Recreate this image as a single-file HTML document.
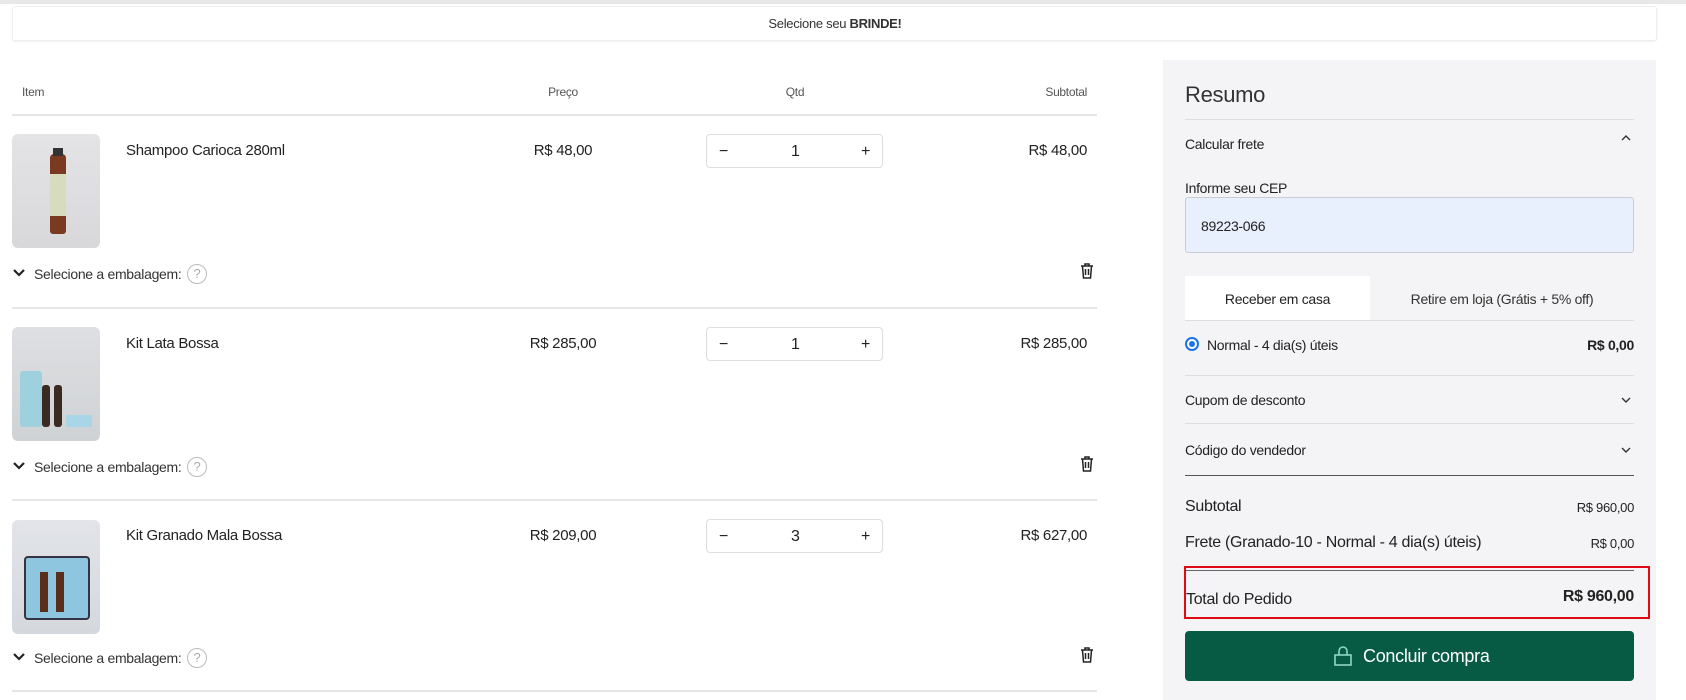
<!DOCTYPE html>
<html><head><meta charset="utf-8"><style>
*{margin:0;padding:0;box-sizing:border-box}
body{width:1686px;height:700px;background:#fff;position:relative;overflow:hidden;font-family:"Liberation Sans",sans-serif;color:#222;letter-spacing:-0.3px}
.a{position:absolute;white-space:nowrap}
.ln{position:absolute;height:2px;background:#e6e6e6}
.img{position:absolute;left:12px;width:88px;height:114px;border-radius:6px;background:linear-gradient(#e4e4e6,#d8d8da)}
.qty{position:absolute;left:706px;width:177px;height:34px;border:1px solid #ddd;border-radius:4px;background:#fff;font-size:16px}
.qty span{position:absolute;top:8px}
.sel{font-size:14px;color:#333}
.help{position:absolute;width:20px;height:20px;border:1.5px solid #bbb;border-radius:50%;color:#aaa;font-size:13px;text-align:center;line-height:17px}
.r{font-size:15px}
</style></head><body>
<div class="a" style="left:0;top:0;width:1686px;height:4px;background:#e8e8e8"></div>
<div class="a" style="left:12px;top:6px;width:1645px;height:35px;border:1px solid #eee;border-radius:3px;box-shadow:0 1px 2px rgba(0,0,0,.05)"></div>
<div class="a" style="left:0;width:1670px;text-align:center;top:16px;font-size:13px;color:#333">Selecione seu <b>BRINDE!</b></div>

<div class="a" style="left:22px;top:85px;font-size:12px;color:#555">Item</div>
<div class="a" style="left:513px;width:100px;text-align:center;top:85px;font-size:12px;color:#555">Preço</div>
<div class="a" style="left:745px;width:100px;text-align:center;top:85px;font-size:12px;color:#555">Qtd</div>
<div class="a" style="left:987px;width:100px;text-align:right;top:85px;font-size:12px;color:#555">Subtotal</div>
<div class="ln" style="left:12px;top:114px;width:1085px"></div>

<div class="img" style="top:134px"><div style="position:absolute;left:38px;top:20px;width:16px;height:80px;background:#7a3a22;border-radius:4px 4px 3px 3px"></div><div style="position:absolute;left:38px;top:40px;width:16px;height:42px;background:#d7dcbf"></div><div style="position:absolute;left:41px;top:14px;width:10px;height:8px;background:#333"></div></div>
<div class="a r" style="left:126px;top:142px">Shampoo Carioca 280ml</div>
<div class="a r" style="left:513px;width:100px;text-align:center;top:142px">R$ 48,00</div>
<div class="qty" style="top:134px"><span style="left:12px">−</span><span style="left:84px">1</span><span style="left:154px">+</span></div>
<div class="a r" style="left:987px;width:100px;text-align:right;top:142px">R$ 48,00</div>
<svg class="a" style="left:12px;top:268px" width="14" height="10" viewBox="0 0 14 10" fill="none" stroke="#222" stroke-width="2.2"><path d="M2 2l5 5 5-5"/></svg>
<div class="sel a" style="left:34px;top:266px">Selecione a embalagem:</div>
<div class="help" style="left:187px;top:264px">?</div>
<svg class="a" style="left:1079px;top:262px" width="16" height="18" viewBox="0 0 16 18" fill="none" stroke="#222" stroke-width="1.5"><path d="M2 4h12M6 4V2h4v2M3.5 4l1 12h7l1-12M6.5 7v6M9.5 7v6"/></svg>
<div class="ln" style="left:12px;top:307px;width:1085px"></div>

<div class="img" style="top:327px;background:linear-gradient(#dedfe2,#cfd2d4)"><div style="position:absolute;left:8px;top:44px;width:22px;height:56px;background:#9fd0de;border-radius:3px"></div><div style="position:absolute;left:30px;top:58px;width:8px;height:42px;background:#3a2a22;border-radius:3px"></div><div style="position:absolute;left:42px;top:58px;width:8px;height:42px;background:#3a2a22;border-radius:3px"></div><div style="position:absolute;left:54px;top:88px;width:26px;height:12px;background:#a8d6e6"></div></div>
<div class="a r" style="left:126px;top:335px">Kit Lata Bossa</div>
<div class="a r" style="left:513px;width:100px;text-align:center;top:335px">R$ 285,00</div>
<div class="qty" style="top:327px"><span style="left:12px">−</span><span style="left:84px">1</span><span style="left:154px">+</span></div>
<div class="a r" style="left:987px;width:100px;text-align:right;top:335px">R$ 285,00</div>
<svg class="a" style="left:12px;top:461px" width="14" height="10" viewBox="0 0 14 10" fill="none" stroke="#222" stroke-width="2.2"><path d="M2 2l5 5 5-5"/></svg>
<div class="sel a" style="left:34px;top:459px">Selecione a embalagem:</div>
<div class="help" style="left:187px;top:457px">?</div>
<svg class="a" style="left:1079px;top:455px" width="16" height="18" viewBox="0 0 16 18" fill="none" stroke="#222" stroke-width="1.5"><path d="M2 4h12M6 4V2h4v2M3.5 4l1 12h7l1-12M6.5 7v6M9.5 7v6"/></svg>
<div class="ln" style="left:12px;top:499px;width:1085px"></div>

<div class="img" style="top:520px;background:linear-gradient(#e2e4e8,#d4d8dc)"><div style="position:absolute;left:12px;top:36px;width:66px;height:64px;border:2px solid #334;border-radius:4px;background:#8ec6e0"></div><div style="position:absolute;left:28px;top:52px;width:8px;height:40px;background:#5a2e1a"></div><div style="position:absolute;left:44px;top:52px;width:8px;height:40px;background:#5a2e1a"></div></div>
<div class="a r" style="left:126px;top:527px">Kit Granado Mala Bossa</div>
<div class="a r" style="left:513px;width:100px;text-align:center;top:527px">R$ 209,00</div>
<div class="qty" style="top:519px"><span style="left:12px">−</span><span style="left:84px">3</span><span style="left:154px">+</span></div>
<div class="a r" style="left:987px;width:100px;text-align:right;top:527px">R$ 627,00</div>
<svg class="a" style="left:12px;top:652px" width="14" height="10" viewBox="0 0 14 10" fill="none" stroke="#222" stroke-width="2.2"><path d="M2 2l5 5 5-5"/></svg>
<div class="sel a" style="left:34px;top:650px">Selecione a embalagem:</div>
<div class="help" style="left:187px;top:648px">?</div>
<svg class="a" style="left:1079px;top:646px" width="16" height="18" viewBox="0 0 16 18" fill="none" stroke="#222" stroke-width="1.5"><path d="M2 4h12M6 4V2h4v2M3.5 4l1 12h7l1-12M6.5 7v6M9.5 7v6"/></svg>
<div class="ln" style="left:12px;top:690px;width:1085px"></div>

<div class="a" style="left:1163px;top:60px;width:493px;height:640px;background:#f4f4f6"></div>
<div class="a" style="left:1185px;top:82px;font-size:22px;color:#333">Resumo</div>
<div class="ln" style="left:1185px;top:119px;width:449px;height:1px;background:#ddd"></div>
<div class="a" style="left:1185px;top:136px;font-size:14px">Calcular frete</div>
<svg class="a" style="left:1620px;top:134px" width="12" height="8" viewBox="0 0 12 8" fill="none" stroke="#333" stroke-width="1.4"><path d="M2 6l4-4 4 4"/></svg>
<div class="a" style="left:1185px;top:180px;font-size:14px">Informe seu CEP</div>
<div class="a" style="left:1185px;top:197px;width:449px;height:56px;background:#e8f0fe;border:1px solid #c8ccd4;border-radius:3px"></div>
<div class="a" style="left:1201px;top:218px;font-size:14px">89223-066</div>
<div class="a" style="left:1185px;top:276px;width:185px;height:44px;background:#fff"></div>
<div class="a" style="left:1185px;top:291px;width:185px;text-align:center;font-size:14px">Receber em casa</div>
<div class="a" style="left:1370px;top:291px;width:264px;text-align:center;font-size:14px;color:#333">Retire em loja (Grátis + 5% off)</div>
<div class="ln" style="left:1185px;top:320px;width:449px;height:1px;background:#ddd"></div>
<div class="a" style="left:1185px;top:337px;width:14px;height:14px;border-radius:50%;border:2px solid #1a73e8;background:#fff"><div style="margin:2px;width:6px;height:6px;border-radius:50%;background:#1a73e8"></div></div>
<div class="a" style="left:1207px;top:337px;font-size:14px">Normal - 4 dia(s) úteis</div>
<div class="a" style="left:1534px;width:100px;text-align:right;top:337px;font-size:14px;font-weight:bold">R$ 0,00</div>
<div class="ln" style="left:1185px;top:375px;width:449px;height:1px;background:#ddd"></div>
<div class="a" style="left:1185px;top:392px;font-size:14px">Cupom de desconto</div>
<svg class="a" style="left:1620px;top:396px" width="12" height="8" viewBox="0 0 12 8" fill="none" stroke="#333" stroke-width="1.4"><path d="M2 2l4 4 4-4"/></svg>
<div class="ln" style="left:1185px;top:423px;width:449px;height:1px;background:#ddd"></div>
<div class="a" style="left:1185px;top:442px;font-size:14px">Código do vendedor</div>
<svg class="a" style="left:1620px;top:446px" width="12" height="8" viewBox="0 0 12 8" fill="none" stroke="#333" stroke-width="1.4"><path d="M2 2l4 4 4-4"/></svg>
<div class="ln" style="left:1185px;top:475px;width:449px;height:1px;background:#555"></div>
<div class="a" style="left:1185px;top:498px;font-size:16px">Subtotal</div>
<div class="a" style="left:1484px;width:150px;text-align:right;top:500px;font-size:13px">R$ 960,00</div>
<div class="a" style="left:1185px;top:534px;font-size:16px">Frete (Granado-10 - Normal - 4 dia(s) úteis)</div>
<div class="a" style="left:1484px;width:150px;text-align:right;top:536px;font-size:13px">R$ 0,00</div>
<div class="a" style="left:1184px;top:566px;width:466px;height:53px;border:2px solid #e00a14"></div>
<div class="ln" style="left:1186px;top:570px;width:448px;height:1px;background:#666"></div>
<div class="a" style="left:1186px;top:591px;font-size:16px">Total do Pedido</div>
<div class="a" style="left:1484px;width:150px;text-align:right;top:588px;font-size:16px;font-weight:bold">R$ 960,00</div>
<div class="a" style="left:1185px;top:631px;width:449px;height:50px;background:#075b45;border-radius:4px"></div>
<svg class="a" style="left:1333px;top:645px" width="20" height="22" viewBox="0 0 20 22" fill="none" stroke="#8fd8c0" stroke-width="1.6"><rect x="2" y="10" width="16" height="10"/><path d="M6 10V6a4 4 0 0 1 8 0v4"/></svg>
<div class="a" style="left:1363px;top:646px;font-size:18px;color:#fff">Concluir compra</div>
</body></html>
